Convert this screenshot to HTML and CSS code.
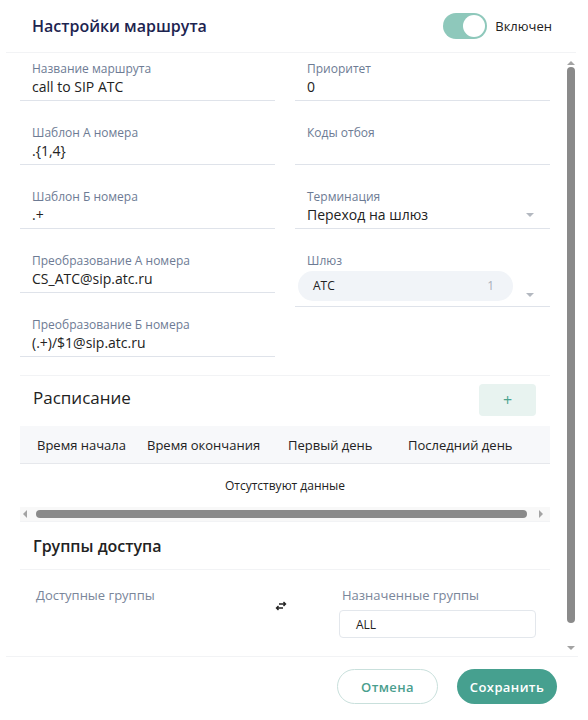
FILE: index.html
```html
<!DOCTYPE html>
<html lang="ru">
<head>
  <meta charset="UTF-8">
  <meta name="viewport" content="width=device-width, initial-scale=1.0">
  <title>Настройки маршрута</title>
  <link rel="stylesheet" href="styles.css">
</head>
<body>
  <div class="dialog">
    <div class="dlg-head">
      <div class="dlg-title">Настройки маршрута</div>
      <label class="switch">
        <span class="switch-track"><span class="switch-knob"></span></span>
        <span class="switch-text">Включен</span>
      </label>
    </div>

    <div class="dlg-body">
      <div class="body-content">
        <div class="fields">
          <div class="col">
            <div class="field">
              <div class="field-label">Название маршрута</div>
              <div class="field-value">call to SIP ATC</div>
            </div>
            <div class="field">
              <div class="field-label">Шаблон А номера</div>
              <div class="field-value">.{1,4}</div>
            </div>
            <div class="field">
              <div class="field-label">Шаблон Б номера</div>
              <div class="field-value">.+</div>
            </div>
            <div class="field">
              <div class="field-label">Преобразование А номера</div>
              <div class="field-value">CS_ATC@sip.atc.ru</div>
            </div>
            <div class="field">
              <div class="field-label">Преобразование Б номера</div>
              <div class="field-value">(.+)/$1@sip.atc.ru</div>
            </div>
          </div>
          <div class="col">
            <div class="field">
              <div class="field-label">Приоритет</div>
              <div class="field-value">0</div>
            </div>
            <div class="field">
              <div class="field-label">Коды отбоя</div>
              <div class="field-value"></div>
            </div>
            <div class="field">
              <div class="field-label">Терминация</div>
              <div class="field-value select">
                <span>Переход на шлюз</span>
                <span class="caret"></span>
              </div>
            </div>
            <div class="field">
              <div class="field-label">Шлюз</div>
              <div class="field-value select chips">
                <span class="chip"><span>ATC</span><span class="chip-count">1</span></span>
                <span class="caret low"></span>
              </div>
            </div>
          </div>
        </div>

        <div class="section-head">
          <div class="section-title">Расписание</div>
          <button class="add-btn">+</button>
        </div>
        <div class="table">
          <div class="table-head">
            <div class="th c1">Время начала</div>
            <div class="th c2">Время окончания</div>
            <div class="th c3">Первый день</div>
            <div class="th c4">Последний день</div>
          </div>
          <div class="table-empty">Отсутствуют данные</div>
          <div class="hscroll">
            <span class="arrow left"></span>
            <span class="hthumb"></span>
            <span class="arrow right"></span>
          </div>
        </div>

        <div class="section-head groups-head">
          <div class="section-title small">Группы доступа</div>
        </div>
        <div class="groups">
          <div class="group-col">
            <div class="group-label">Доступные группы</div>
          </div>
          <div class="swap">
            <svg width="12" height="10" viewBox="0 0 12 10">
              <path d="M4 3H10.5M8.5 1L10.5 3L8.5 5" fill="none" stroke="#222" stroke-width="1.4"/>
              <path d="M8 7H1.5M3.5 5L1.5 7L3.5 9" fill="none" stroke="#222" stroke-width="1.4"/>
            </svg>
          </div>
          <div class="group-col right">
            <div class="group-label">Назначенные группы</div>
            <div class="group-box">ALL</div>
          </div>
        </div>
      </div>
      <div class="vscroll">
        <span class="arrow up"></span>
        <span class="vthumb"></span>
        <span class="arrow down"></span>
      </div>
    </div>

    <div class="dlg-foot">
      <button class="btn btn-cancel">Отмена</button>
      <button class="btn btn-save">Сохранить</button>
    </div>
  </div>
</body>
</html>
```

FILE: styles.css
```css
body{
  margin: 0;
  background-color: #fff;
  font-family: "Open Sans", "Noto Sans", sans-serif;
  color: #222;
}
.dialog{
  width: 588px;
  height: 720px;
  display: flex;
  flex-direction: column;
}
.dlg-head{
  height: 52px;
  margin: 0 12px 0 6px;
  padding: 0 24px 0 26px;
  display: flex;
  align-items: center;
  justify-content: space-between;
  border-bottom: 1px solid #f2f3f5;
}
.dlg-title{
  font-size: 16px;
  font-weight: 600;
  color: #1d2450;
}
.switch{
  display: flex;
  align-items: center;
  gap: 8px;
}
.switch-track{
  width: 44px;
  height: 26px;
  border-radius: 13px;
  background-color: #8ec8bb;
  display: flex;
  align-items: center;
  justify-content: flex-end;
  padding: 0 2px;
  box-sizing: border-box;
}
.switch-knob{
  width: 22px;
  height: 22px;
  border-radius: 50%;
  background-color: #fff;
}
.switch-text{
  font-size: 13px;
  color: #222;
}

.dlg-body{
  height: 603px;
  display: flex;
  margin: 0 10px 0 6px;
  border-bottom: 1px solid #f2f3f5;
}
.body-content{
  flex: 1;
  overflow: hidden;
  padding: 8px 13px 0 14px;
}
.fields{
  display: grid;
  grid-template-columns: 255px 255px;
  column-gap: 20px;
  align-items: start;
}
.col{
  display: flex;
  flex-direction: column;
  gap: 24px;
}
.field{
  border-bottom: 1px solid #dfe3ea;
  padding-bottom: 3px;
}
.field-label{
  font-size: 12px;
  line-height: 16px;
  color: #6d7b94;
  padding-left: 12px;
}
.field-value{
  font-size: 14px;
  line-height: 20px;
  min-height: 20px;
  padding-left: 12px;
}
.select{
  display: flex;
  align-items: center;
  justify-content: space-between;
  padding-right: 16px;
}
.caret{
  width: 0;
  height: 0;
  border-left: 4px solid transparent;
  border-right: 4px solid transparent;
  border-top: 4px solid #b3b8c0;
}
.chips{
  padding-left: 3px;
  padding-top: 2px;
  padding-bottom: 2px;
  align-items: flex-end;
}
.caret.low{
  margin-bottom: 4px;
}
.chip{
  width: 215px;
  height: 30px;
  box-sizing: border-box;
  border-radius: 15px;
  background-color: #f1f4f8;
  display: flex;
  align-items: center;
  justify-content: space-between;
  padding: 0 19px 0 15px;
  font-size: 12px;
}
.chip-count{
  color: #a9b0ba;
}

.section-head{
  margin-top: 18px;
  border-top: 1px solid #f2f3f5;
  height: 51px;
  display: flex;
  align-items: center;
  justify-content: space-between;
  padding: 0 14px 8px 13px;
  box-sizing: border-box;
}
.section-title{
  font-size: 17px;
  font-weight: 500;
}
.section-title.small{
  font-size: 16px;
  font-weight: 600;
}
.add-btn{
  width: 57px;
  height: 32px;
  border: none;
  border-radius: 4px;
  background-color: #e8f3f0;
  color: #4aa38f;
  font-size: 16px;
  font-family: "Open Sans", sans-serif;
  margin-top: 5px;
}
.table-head{
  height: 38px;
  box-sizing: border-box;
  background-color: #f7f8fa;
  border-bottom: 1px solid #e6e8ec;
  display: flex;
  align-items: center;
  font-size: 13px;
  white-space: nowrap;
}
.c1{
  width: 110px;
  padding-left: 17px;
}
.c2{
  width: 141px;
}
.c3{
  width: 120px;
}
.table-empty{
  height: 43px;
  display: flex;
  align-items: center;
  justify-content: center;
  font-size: 12px;
}
.hscroll{
  height: 14px;
  background-color: #f8f8f8;
  display: flex;
  align-items: center;
  padding: 0 7px 0 3px;
}
.hthumb{
  flex: 1;
  height: 8px;
  border-radius: 4px;
  background-color: #8a8a8a;
  margin: 0 12px 0 9px;
}
.arrow{
  width: 0;
  height: 0;
  flex: none;
}
.arrow.left{
  border-top: 4px solid transparent;
  border-bottom: 4px solid transparent;
  border-right: 4px solid #a3a3a3;
}
.arrow.right{
  border-top: 4px solid transparent;
  border-bottom: 4px solid transparent;
  border-left: 4px solid #a3a3a3;
}
.arrow.up{
  border-left: 4px solid transparent;
  border-right: 4px solid transparent;
  border-bottom: 4px solid #a3a3a3;
}
.arrow.down{
  border-left: 4px solid transparent;
  border-right: 4px solid transparent;
  border-top: 4px solid #a3a3a3;
}
.groups-head{
  margin-top: 0;
  height: 49px;
  padding-bottom: 0;
  border-bottom: 1px solid #f2f3f5;
}
.groups{
  display: flex;
  padding-top: 16px;
}
.group-col{
  width: 210px;
  padding-left: 13px;
}
.group-col.right{
  width: 197px;
  padding-left: 20px;
}
.group-label{
  font-size: 13px;
  color: #7a869a;
  line-height: 18px;
  padding-left: 3px;
}
.swap{
  width: 76px;
  padding-top: 15px;
  display: flex;
  justify-content: center;
}
.group-box{
  margin-top: 6px;
  width: 197px;
  height: 28px;
  box-sizing: border-box;
  border: 1px solid #e3e7ec;
  border-radius: 4px;
  font-size: 12px;
  display: flex;
  align-items: center;
  padding-left: 16px;
}
.vscroll{
  width: 15px;
  display: flex;
  flex-direction: column;
  align-items: center;
  padding: 8px 0 6px;
  gap: 2px;
  box-sizing: border-box;
}
.vthumb{
  flex: 1;
  width: 8px;
  border-radius: 4px;
  background-color: #8a8a8a;
  margin-bottom: 21px;
}

.dlg-foot{
  flex: 1;
  display: flex;
  justify-content: flex-end;
  align-items: flex-start;
  padding: 12px 31px 0 0;
  gap: 19px;
}
.btn{
  height: 35px;
  border-radius: 18px;
  font-family: "Open Sans", sans-serif;
  font-size: 13px;
  font-weight: 600;
  letter-spacing: 0.4px;
  cursor: pointer;
}
.btn-cancel{
  width: 101px;
  background-color: #fff;
  border: 1px solid #c9e0dc;
  color: #4a9e8e;
}
.btn-save{
  width: 100px;
  border: none;
  background-color: #46a08f;
  color: #fff;
}
```
